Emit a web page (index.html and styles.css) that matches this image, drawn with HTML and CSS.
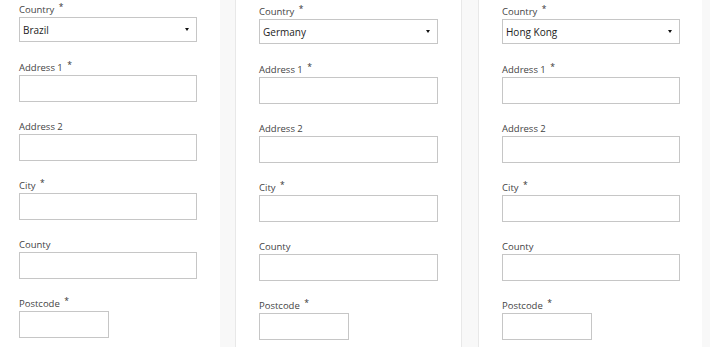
FILE: index.html
```html
<!DOCTYPE html>
<html lang="en">
<head>
    <meta charset="UTF-8">
    <meta name="viewport" content="width=device-width, initial-scale=1.0">
    <title>Address forms</title>
    <link rel="stylesheet" href="styles.css">
</head>
<body>
    <div class="forms">
        <!-- Brazil -->
        <form class="panel panel-first">
            <div class="field field-select">
                <label>Country <span class="req">*</span></label>
                <div class="select-wrap">
                    <select><option>Brazil</option></select>
                </div>
            </div>
            <div class="field">
                <label>Address 1 <span class="req">*</span></label>
                <input type="text">
            </div>
            <div class="field">
                <label>Address 2</label>
                <input type="text">
            </div>
            <div class="field">
                <label>City <span class="req">*</span></label>
                <input type="text">
            </div>
            <div class="field">
                <label>County</label>
                <input type="text">
            </div>
            <div class="field">
                <label>Postcode <span class="req">*</span></label>
                <input type="text" class="short">
            </div>
        </form>

        <!-- Germany -->
        <form class="panel panel-middle">
            <div class="field field-select">
                <label>Country <span class="req">*</span></label>
                <div class="select-wrap">
                    <select><option>Germany</option></select>
                </div>
            </div>
            <div class="field">
                <label>Address 1 <span class="req">*</span></label>
                <input type="text">
            </div>
            <div class="field">
                <label>Address 2</label>
                <input type="text">
            </div>
            <div class="field">
                <label>City <span class="req">*</span></label>
                <input type="text">
            </div>
            <div class="field">
                <label>County</label>
                <input type="text">
            </div>
            <div class="field">
                <label>Postcode <span class="req">*</span></label>
                <input type="text" class="short">
            </div>
        </form>

        <!-- Hong Kong -->
        <form class="panel panel-last">
            <div class="field field-select">
                <label>Country <span class="req">*</span></label>
                <div class="select-wrap">
                    <select><option>Hong Kong</option></select>
                </div>
            </div>
            <div class="field">
                <label>Address 1 <span class="req">*</span></label>
                <input type="text">
            </div>
            <div class="field">
                <label>Address 2</label>
                <input type="text">
            </div>
            <div class="field">
                <label>City <span class="req">*</span></label>
                <input type="text">
            </div>
            <div class="field">
                <label>County</label>
                <input type="text">
            </div>
            <div class="field">
                <label>Postcode <span class="req">*</span></label>
                <input type="text" class="short">
            </div>
        </form>
    </div>
</body>
</html>
```

FILE: styles.css
```css
body {
    font-family: "Open Sans", "Noto Sans", sans-serif;
    background-color: #f8f8f8;
    margin: 0;
    padding: 0;
    overflow: hidden;
}
.forms {
    display: flex;
    margin-left: -6px;
}
.panel {
    flex: none;
    background-color: white;
    box-sizing: border-box;
    height: 347px;
}
.panel-first {
    width: 226px;
    padding: 3px 23px 0 25px;
}
.panel-middle {
    width: 227px;
    margin-left: 15px;
    padding: 5px 23px 0 23px;
    border-left: 1px solid #e8e8e8;
    border-right: 1px solid #e8e8e8;
}
.panel-last {
    width: 224px;
    margin-left: 16px;
    padding: 5px 22px 0 23px;
    border-left: 1px solid #e8e8e8;
}
.field {
    margin-bottom: 18px;
}
.field-select {
    margin-bottom: 19px;
}
label {
    display: block;
    height: 14px;
    font-size: 9.5px;
    line-height: 14px;
    color: #444;
}
.req {
    position: relative;
    top: -3px;
    font-size: 8.5px;
    margin-left: 2px;
    color: #333;
}
input, select {
    display: block;
    width: 100%;
    height: 27px;
    margin: 0;
    border: 1px solid #c6c6c6;
    border-radius: 0;
    background: white;
    box-sizing: border-box;
    font-family: inherit;
}
input.short {
    width: 90px;
}
.select-wrap {
    position: relative;
}
select {
    height: 25px;
    padding: 0 0 0 3px;
    font-size: 10px;
    color: #222;
    appearance: none;
    -webkit-appearance: none;
}
/* the little dropdown arrow */
.select-wrap::after {
    content: "";
    position: absolute;
    right: 8px;
    top: 11px;
    border-left: 2.5px solid transparent;
    border-right: 2.5px solid transparent;
    border-top: 3.5px solid #111;
    pointer-events: none;
}
```
